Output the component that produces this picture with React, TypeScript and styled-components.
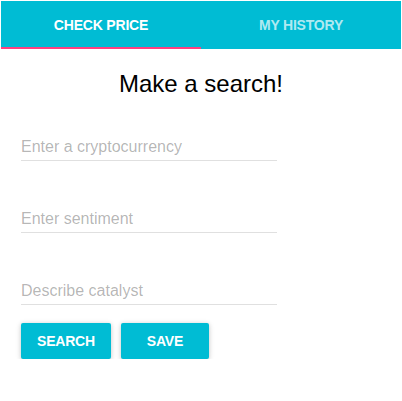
import React from "react";
import styled, { createGlobalStyle } from "styled-components";

const Global = createGlobalStyle`
  html, body { margin: 0; padding: 0; background: #fff; }
  body { font-family: "Liberation Sans", Arial, sans-serif; }
`;

const Page = styled.div`
  width: 400px;
  padding: 1px 1px 0 1px;
`;

const TabBar = styled.div`
  position: relative;
  display: flex;
  height: 48px;
  background: #00bcd4;
`;

const Tab = styled.div<{ $active?: boolean }>`
  flex: 1;
  display: flex;
  align-items: center;
  justify-content: center;
  font-size: 14px;
  font-weight: 700;
  letter-spacing: -0.2px;
  color: ${(p) => (p.$active ? "#fff" : "rgba(255,255,255,0.7)")};
  text-transform: uppercase;
  padding-bottom: 1px;
`;

const Indicator = styled.div`
  position: absolute;
  left: 0;
  bottom: 0;
  width: 50%;
  height: 2px;
  background: #ff4081;
`;

const Title = styled.h1`
  margin: 19px 0 0;
  font-size: 24px;
  font-weight: 400;
  line-height: 32px;
  text-align: center;
  color: #000;
`;

const Form = styled.div`
  display: flex;
  flex-direction: column;
  padding-left: 20px;
  margin-top: 5px;
`;

const Field = styled.div`
  width: 256px;
  height: 72px;
  display: flex;
  flex-direction: column;
  justify-content: flex-end;
`;

const Input = styled.input`
  width: 100%;
  height: 24px;
  padding: 0 0 1px;
  margin: 0 0 16px;
  border: none;
  border-bottom: 1px solid #e0e0e0;
  outline: none;
  font-family: "Liberation Sans", Arial, sans-serif;
  font-size: 16px;
  box-sizing: content-box;
  background: transparent;
  &::placeholder { color: rgba(0, 0, 0, 0.3); }
`;

const Buttons = styled.div`
  display: flex;
  gap: 10px;
  margin-top: 2px;
`;

const Button = styled.button`
  min-width: 88px;
  height: 36px;
  padding: 0 16px;
  border: none;
  border-radius: 2px;
  background: #00bcd4;
  color: #fff;
  font-family: "Liberation Sans", Arial, sans-serif;
  font-size: 14px;
  font-weight: 700;
  letter-spacing: -0.2px;
  text-transform: uppercase;
  box-shadow: 0 1px 6px rgba(0,0,0,0.12), 0 1px 4px rgba(0,0,0,0.12);
`;

export default function App() {
  return (
    <Page>
      <Global />
      <TabBar>
        <Tab $active>Check Price</Tab>
        <Tab>My History</Tab>
        <Indicator />
      </TabBar>
      <Title>Make a search!</Title>
      <Form>
        <Field><Input placeholder="Enter a cryptocurrency" /></Field>
        <Field><Input placeholder="Enter sentiment" /></Field>
        <Field><Input placeholder="Describe catalyst" /></Field>
        <Buttons>
          <Button>Search</Button>
          <Button>Save</Button>
        </Buttons>
      </Form>
    </Page>
  );
}
